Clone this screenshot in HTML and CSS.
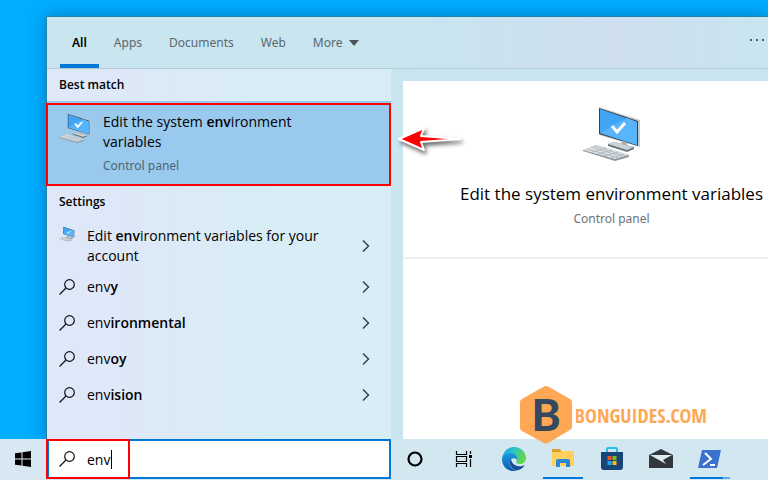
FILE: index.html
```html
<!DOCTYPE html>
<html lang="en">
<head>
    <meta charset="UTF-8">
    <meta name="viewport" content="width=device-width, initial-scale=1.0">
    <title>Search</title>
    <link rel="stylesheet" href="styles.css">
</head>
<body>

<!-- Shared icons -->
<svg class="icon-defs" aria-hidden="true">
    <symbol id="icon-computer" viewBox="0 0 58 54">
        <path d="M16 0 L57 13 V40 L16 28 Z" fill="#c3c8cb"/>
        <path d="M16 1 L55 14 V39 L16 27 Z" fill="#33424e"/>
        <path d="M17 2 L54 15 V38 L17 26 Z" fill="#41a5f5"/>
        <path d="M17 26 L44 11 L54 15 V38 Z" fill="#58b4fb"/>
        <path d="M29 19 L34 25 L42 16" fill="none" stroke="#fff" stroke-width="3"/>
        <path d="M39 34 L44 35 V39 L38 38 Z" fill="#aab2b7"/>
        <path d="M25 37 L31 35 L51 40 V42 L44 45 L25 39 Z" fill="#68767d"/>
        <path d="M25 37 L31 35 L51 40 L44 43 Z" fill="#cdd4d8"/>
        <path d="M0 43 L14 38 L46 48 V50 L32 54 L0 44 Z" fill="#8d979d"/>
        <path d="M0 43 L14 38 L46 48 L32 52 Z" fill="#dfe3e6"/>
        <path d="M4 42 L36 51 M8 40 L40 50 M11 39 L43 49 M9 45 L23 41 M15 47 L29 43 M21 49 L35 45 M27 51 L41 47" stroke="#b4bcc1" stroke-width="1"/>
    </symbol>
    <symbol id="icon-search" viewBox="0 0 16 16">
        <circle cx="10.500" cy="5.500" r="4.800" fill="none" stroke="#111" stroke-width="1.200"/>
        <path d="M7 9 L0.500 15.500" stroke="#111" stroke-width="1.200"/>
    </symbol>
    <symbol id="icon-chevron" viewBox="0 0 8 12">
        <path d="M1 0.500 L6.500 6 L1 11.500" fill="none" stroke="#3c4347" stroke-width="1.500"/>
    </symbol>
</svg>

<main class="desktop">
    <section class="search-panel">
        <nav class="tabs">
            <button type="button" class="tab active">All</button>
            <button type="button" class="tab">Apps</button>
            <button type="button" class="tab">Documents</button>
            <button type="button" class="tab">Web</button>
            <button type="button" class="tab">More
                <svg width="10" height="6" viewBox="0 0 10 6"><path d="M0 0 H10 L5 6 Z" fill="#4a5357"/></svg>
            </button>
            <button type="button" class="options" aria-label="Options">
                <svg width="16" height="10" viewBox="0 0 16 10"><path d="M0 1h2v2H0z M6 1h2v2H6z M12 1h2v2h-2z" fill="#5a6267"/></svg>
            </button>
        </nav>

        <div class="content">
            <div class="results">
                <h2>Best match</h2>
                <a href="#" class="best-match">
                    <svg class="best-icon"><use href="#icon-computer"/></svg>
                    <span class="best-text">
                        <span>Edit the system <b>env</b>ironment variables</span>
                        <small>Control panel</small>
                    </span>
                    <span class="marker"></span>
                </a>

                <h2>Settings</h2>
                <a href="#" class="result setting">
                    <svg class="small-icon"><use href="#icon-computer"/></svg>
                    <span class="label">Edit <b>env</b>ironment variables for your account</span>
                    <svg class="chevron"><use href="#icon-chevron"/></svg>
                </a>
                <a href="#" class="result">
                    <svg class="small-icon"><use href="#icon-search"/></svg>
                    <span class="label">env<b>y</b></span>
                    <svg class="chevron"><use href="#icon-chevron"/></svg>
                </a>
                <a href="#" class="result">
                    <svg class="small-icon"><use href="#icon-search"/></svg>
                    <span class="label">env<b>ironmental</b></span>
                    <svg class="chevron"><use href="#icon-chevron"/></svg>
                </a>
                <a href="#" class="result">
                    <svg class="small-icon"><use href="#icon-search"/></svg>
                    <span class="label">env<b>oy</b></span>
                    <svg class="chevron"><use href="#icon-chevron"/></svg>
                </a>
                <a href="#" class="result">
                    <svg class="small-icon"><use href="#icon-search"/></svg>
                    <span class="label">env<b>ision</b></span>
                    <svg class="chevron"><use href="#icon-chevron"/></svg>
                </a>
            </div>

            <div class="preview">
                <div class="preview-head">
                    <svg class="preview-icon"><use href="#icon-computer"/></svg>
                    <h1>Edit the system environment variables</h1>
                    <p>Control panel</p>
                </div>
                <svg class="arrow" viewBox="0 0 70 32">
                    <path d="M4 15 L29 4 L26 12 L65 15 L26 18 L29 26 Z" fill="#f00" stroke="#fff" stroke-width="2" stroke-linejoin="round"/>
                </svg>
            </div>
        </div>
    </section>
</main>

<footer class="taskbar">
    <button type="button" class="start" aria-label="Start">
        <svg width="16" height="16" viewBox="0 0 16 16"><path d="M0 2.300 L6.500 1.400 V7.500 H0 Z M7.500 1.200 L16 0 V7.500 H7.500 Z M0 8.500 H6.500 V14.600 L0 13.700 Z M7.500 8.500 H16 V16 L7.500 14.800 Z" fill="#000"/></svg>
    </button>

    <div class="search-box">
        <svg class="small-icon"><use href="#icon-search"/></svg>
        <input type="text" value="env" aria-label="Search">
        <span class="caret"></span>
        <span class="marker"></span>
    </div>

    <button type="button" class="task" aria-label="Cortana">
        <svg width="18" height="16" viewBox="0 0 18 16"><circle cx="8" cy="8" r="6.500" fill="none" stroke="#000" stroke-width="2.200"/></svg>
    </button>
    <button type="button" class="task" aria-label="Task View">
        <svg width="22" height="16" viewBox="0 0 22 16"><path d="M2.500 0 V3.500 H12.500 V0 M2.500 5.500 H12.500 V10.500 H2.500 Z M2.500 16 V12.500 H12.500 V16 M16.500 0 V3 M16.500 8 V16" fill="none" stroke="#000" stroke-width="1.200"/><path d="M15 4h3v3h-3z" fill="#000"/></svg>
    </button>
    <button type="button" class="task" aria-label="Edge">
        <svg width="24" height="24" viewBox="0 0 24 24">
            <defs>
                <linearGradient id="edge-top" x1="0" x2="1" y1="0" y2="0.400"><stop offset="0" stop-color="#1b9de2"/><stop offset="0.500" stop-color="#2fc3c8"/><stop offset="1" stop-color="#62d84a"/></linearGradient>
                <linearGradient id="edge-body" x1="0" x2="0" y1="0" y2="1"><stop offset="0" stop-color="#1c9ae0"/><stop offset="1" stop-color="#0a5ab0"/></linearGradient>
            </defs>
            <path d="M0 12 C1 4 6 0 12 0 C19 0 24 5 24 11 C24 15 21 17 18 17 C15 17 13.500 15.500 14.500 14 C16 11 13 8 9 8 C4 8 1 10 0 12 Z" fill="url(#edge-top)"/>
            <path d="M0 12 C1 7 5 5.500 9 6 C13 6.500 15.500 9 15 13 C13 10 9 11 8 14 C6.500 19 11 24 16 23.200 C8 26 0 21 0 12 Z" fill="url(#edge-body)"/>
            <path d="M9 12 C6 16 9 23 15.500 23.300 C19 22.500 21.500 20.500 22.700 18 C18 20.500 10 19.500 9 12 Z" fill="#174e9a"/>
        </svg>
    </button>
    <button type="button" class="task open" aria-label="File Explorer">
        <svg width="22" height="20" viewBox="0 0 22 20">
            <path d="M0 1 Q0 0 1 0 H8 L10 3 H0 Z" fill="#d99e2b"/>
            <path d="M0 3 H7 L10 2 H21 Q22 2 22 3 V17 H0 Z" fill="#ffd05c"/>
            <path d="M4 18 V12 Q4 10 6 10 H16 Q18 10 18 12 V18 H14 V14 H8 V18 Z" fill="#2986d5"/>
        </svg>
    </button>
    <button type="button" class="task" aria-label="Microsoft Store">
        <svg width="24" height="24" viewBox="0 0 24 24">
            <path d="M7 6 V2 Q7 1 8 1 H16 Q17 1 17 2 V6" fill="none" stroke="#28bdf0" stroke-width="2"/>
            <path d="M1 5 H23 V20 Q23 23 20 23 H4 Q1 23 1 20 Z" fill="#174577"/>
            <path d="M7.500 9h4v4h-4z" fill="#f3512c"/><path d="M12.500 9h4v4h-4z" fill="#80bc16"/>
            <path d="M7.500 14h4v4h-4z" fill="#20a9ee"/><path d="M12.500 14h4v4h-4z" fill="#fdbb15"/>
        </svg>
    </button>
    <button type="button" class="task" aria-label="Mail">
        <svg width="24" height="20" viewBox="0 0 24 20"><path d="M0 6 L12 0 L24 6 V19 H0 Z" fill="#31373b"/><path d="M1 6 H23 L14 11 L17 15 Z" fill="#dcebf1"/></svg>
    </button>
    <button type="button" class="task open grouped" aria-label="PowerShell">
        <svg width="24" height="20" viewBox="0 0 24 20"><path d="M4 1 H23 L19 19 H0 Z" fill="#3a72ce"/><path d="M7 4 L13 10 L5 16 M12 16 H17" fill="none" stroke="#fff" stroke-width="2"/></svg>
    </button>
</footer>

<div class="watermark">
    <svg width="52" height="58" viewBox="0 0 52 58">
        <path d="M26 0 Q27 0 29 1 L50 13 Q52 14 52 16 V41 Q52 43 50 44 L28 57 Q26 58 24 57 L2 45 Q0 44 0 42 V16 Q0 14 2 13 L23 1 Q25 0 26 0 Z" fill="#fea855"/>
        <text x="26" y="45" text-anchor="middle" class="logo-letter">B</text>
    </svg>
    <span>BONGUIDES.COM</span>
</div>

</body>
</html>
```
FILE: styles.css
```css
* {
    box-sizing: border-box;
}

html, body {
    height: 100%;
    margin: 0;
    overflow: hidden;
}

body {
    display: flex;
    flex-direction: column;
    background-color: #00adff;
    font-family: "Open Sans", "Noto Sans", sans-serif;
    font-size: 14px;
    color: #000;
}

button {
    padding: 0;
    border: none;
    background: none;
    font: inherit;
}

a {
    color: inherit;
    text-decoration: none;
}

b {
    font-weight: 600;
}

svg {
    flex-shrink: 0;
}

.icon-defs {
    position: absolute;
    width: 0;
    height: 0;
}

.desktop {
    flex: 1;
    display: flex;
    min-height: 0;
    padding: 16px 0 0 46px;
}

.search-panel {
    flex: 1;
    display: flex;
    flex-direction: column;
    min-width: 0;
    border: solid #2583ab;
    border-width: 1px 0 0 1px;
    background-color: #c8e5f0;
    box-shadow: 0 0 16px rgba(0, 50, 100, 0.4);
}

/* Tabs */
.tabs {
    display: flex;
    gap: 3px;
    height: 52px;
    padding: 0 2px 0 13px;
    border-bottom: 1px solid #b3cbd5;
    background: linear-gradient(90deg, #c8e5f0 50%, #cfdfef 80%, #c8e5f0);
}

.tab {
    display: flex;
    align-items: center;
    gap: 7px;
    padding: 4px 12px 0;
    border-bottom: 4px solid transparent;
    color: #5a676d;
    font-family: "Noto Sans", sans-serif;
    font-size: 12px;
}

.tab.active {
    border-bottom-color: #0078d7;
    color: #000;
    font-weight: 600;
}

.options {
    margin-left: auto;
}

.content {
    flex: 1;
    display: flex;
    gap: 12px;
    min-height: 0;
}

/* Result list */
.results {
    flex: 0 0 344px;
    background: linear-gradient(90deg, #dee8f8 20%, #d8edf5 65%);
}

h2 {
    margin: 0;
    padding: 0 12px;
    font-size: 12px;
    font-weight: 600;
    line-height: 32px;
}

.best-match {
    position: relative;
    display: flex;
    gap: 12px;
    padding: 11px 60px 10px 12px;
    background-color: #99c9ec;
    line-height: 20px;
}

.best-icon {
    width: 32px;
    height: 32px;
}

.best-text {
    display: flex;
    flex-direction: column;
    gap: 4px;
}

.best-text small {
    color: #4d6577;
    font-family: "Noto Sans", sans-serif;
    font-size: 12px;
}

.result {
    display: flex;
    align-items: center;
    gap: 12px;
    height: 36px;
    padding: 0 21px 0 12px;
    line-height: 20px;
}

.result.setting {
    height: auto;
    padding-top: 8px;
    padding-bottom: 3px;
}

.setting .small-icon {
    align-self: flex-start;
}

.small-icon {
    width: 16px;
    height: 16px;
}

.label {
    flex: 1;
    padding-right: 20px;
}

.chevron {
    width: 8px;
    height: 12px;
}

/* Red highlight drawn over a control */
.marker {
    position: absolute;
    top: 2px;
    right: 0;
    bottom: 0;
    left: -1px;
    border: 2px solid #f00;
}

/* Preview pane */
.preview {
    position: relative;
    flex: 1;
    min-width: 0;
    margin-top: 12px;
    background-color: #fff;
}

.preview-head {
    display: flex;
    flex-direction: column;
    align-items: center;
    height: 178px;
    padding: 26px 0 0 52px;
    border-bottom: 2px solid #efefef;
}

.preview-icon {
    width: 58px;
    height: 54px;
}

h1 {
    margin: 20px 0 0;
    font-size: 17px;
    font-weight: 400;
    line-height: 26px;
    white-space: nowrap;
}

.preview p {
    margin: 2px 0 0;
    color: #6b7379;
    font-family: "Noto Sans", sans-serif;
    font-size: 12px;
    line-height: 20px;
}

.arrow {
    position: absolute;
    top: 43px;
    left: -8px;
    width: 70px;
    height: 32px;
    overflow: visible;
    filter: drop-shadow(2px 3px 2px rgba(0, 0, 0, 0.6));
}

/* Taskbar */
.taskbar {
    display: flex;
    height: 41px;
    padding-bottom: 1px;
    background-color: #d3e7f0;
    z-index: 1;
}

.start {
    width: 46px;
    background-color: #d8e8f2;
    line-height: 0;
}

.search-box {
    position: relative;
    display: flex;
    align-items: center;
    gap: 12px;
    width: 344px;
    margin-left: 1px;
    padding-left: 10px;
    border: 2px solid #0078d7;
    background-color: #fff;
}

.search-box input {
    flex: 1;
    min-width: 0;
    padding: 0;
    border: none;
    outline: none;
    background: none;
    font: inherit;
}

.search-box .marker {
    top: -2px;
    bottom: -2px;
    left: -3px;
    right: auto;
    width: 84px;
}

.caret {
    position: absolute;
    top: 9px;
    left: 62px;
    width: 1px;
    height: 19px;
    background-color: #000;
}

.task {
    display: flex;
    align-items: center;
    justify-content: center;
    flex: 0 0 49px;
    border-top: 2px solid transparent;
    border-bottom: 2px solid transparent;
}

.task.open {
    flex-basis: 40px;
    margin: 0 4px 0 5px;
    border-bottom-color: #0078d7;
}

.task.grouped {
    border-image: linear-gradient(90deg, #0078d7 80%, #66a9de 80%) 2;
    border-top-width: 0;
    padding-top: 2px;
}

/* Site logo */
.watermark {
    position: absolute;
    right: 61px;
    bottom: 36px;
    display: flex;
    align-items: center;
    gap: 3px;
    z-index: 2;
    color: #fea855;
    font: bold 20px "Open Sans Condensed", "Roboto Condensed", sans-serif;
}

.logo-letter {
    fill: #364860;
    font: 900 44px Lato, sans-serif;
}
```
